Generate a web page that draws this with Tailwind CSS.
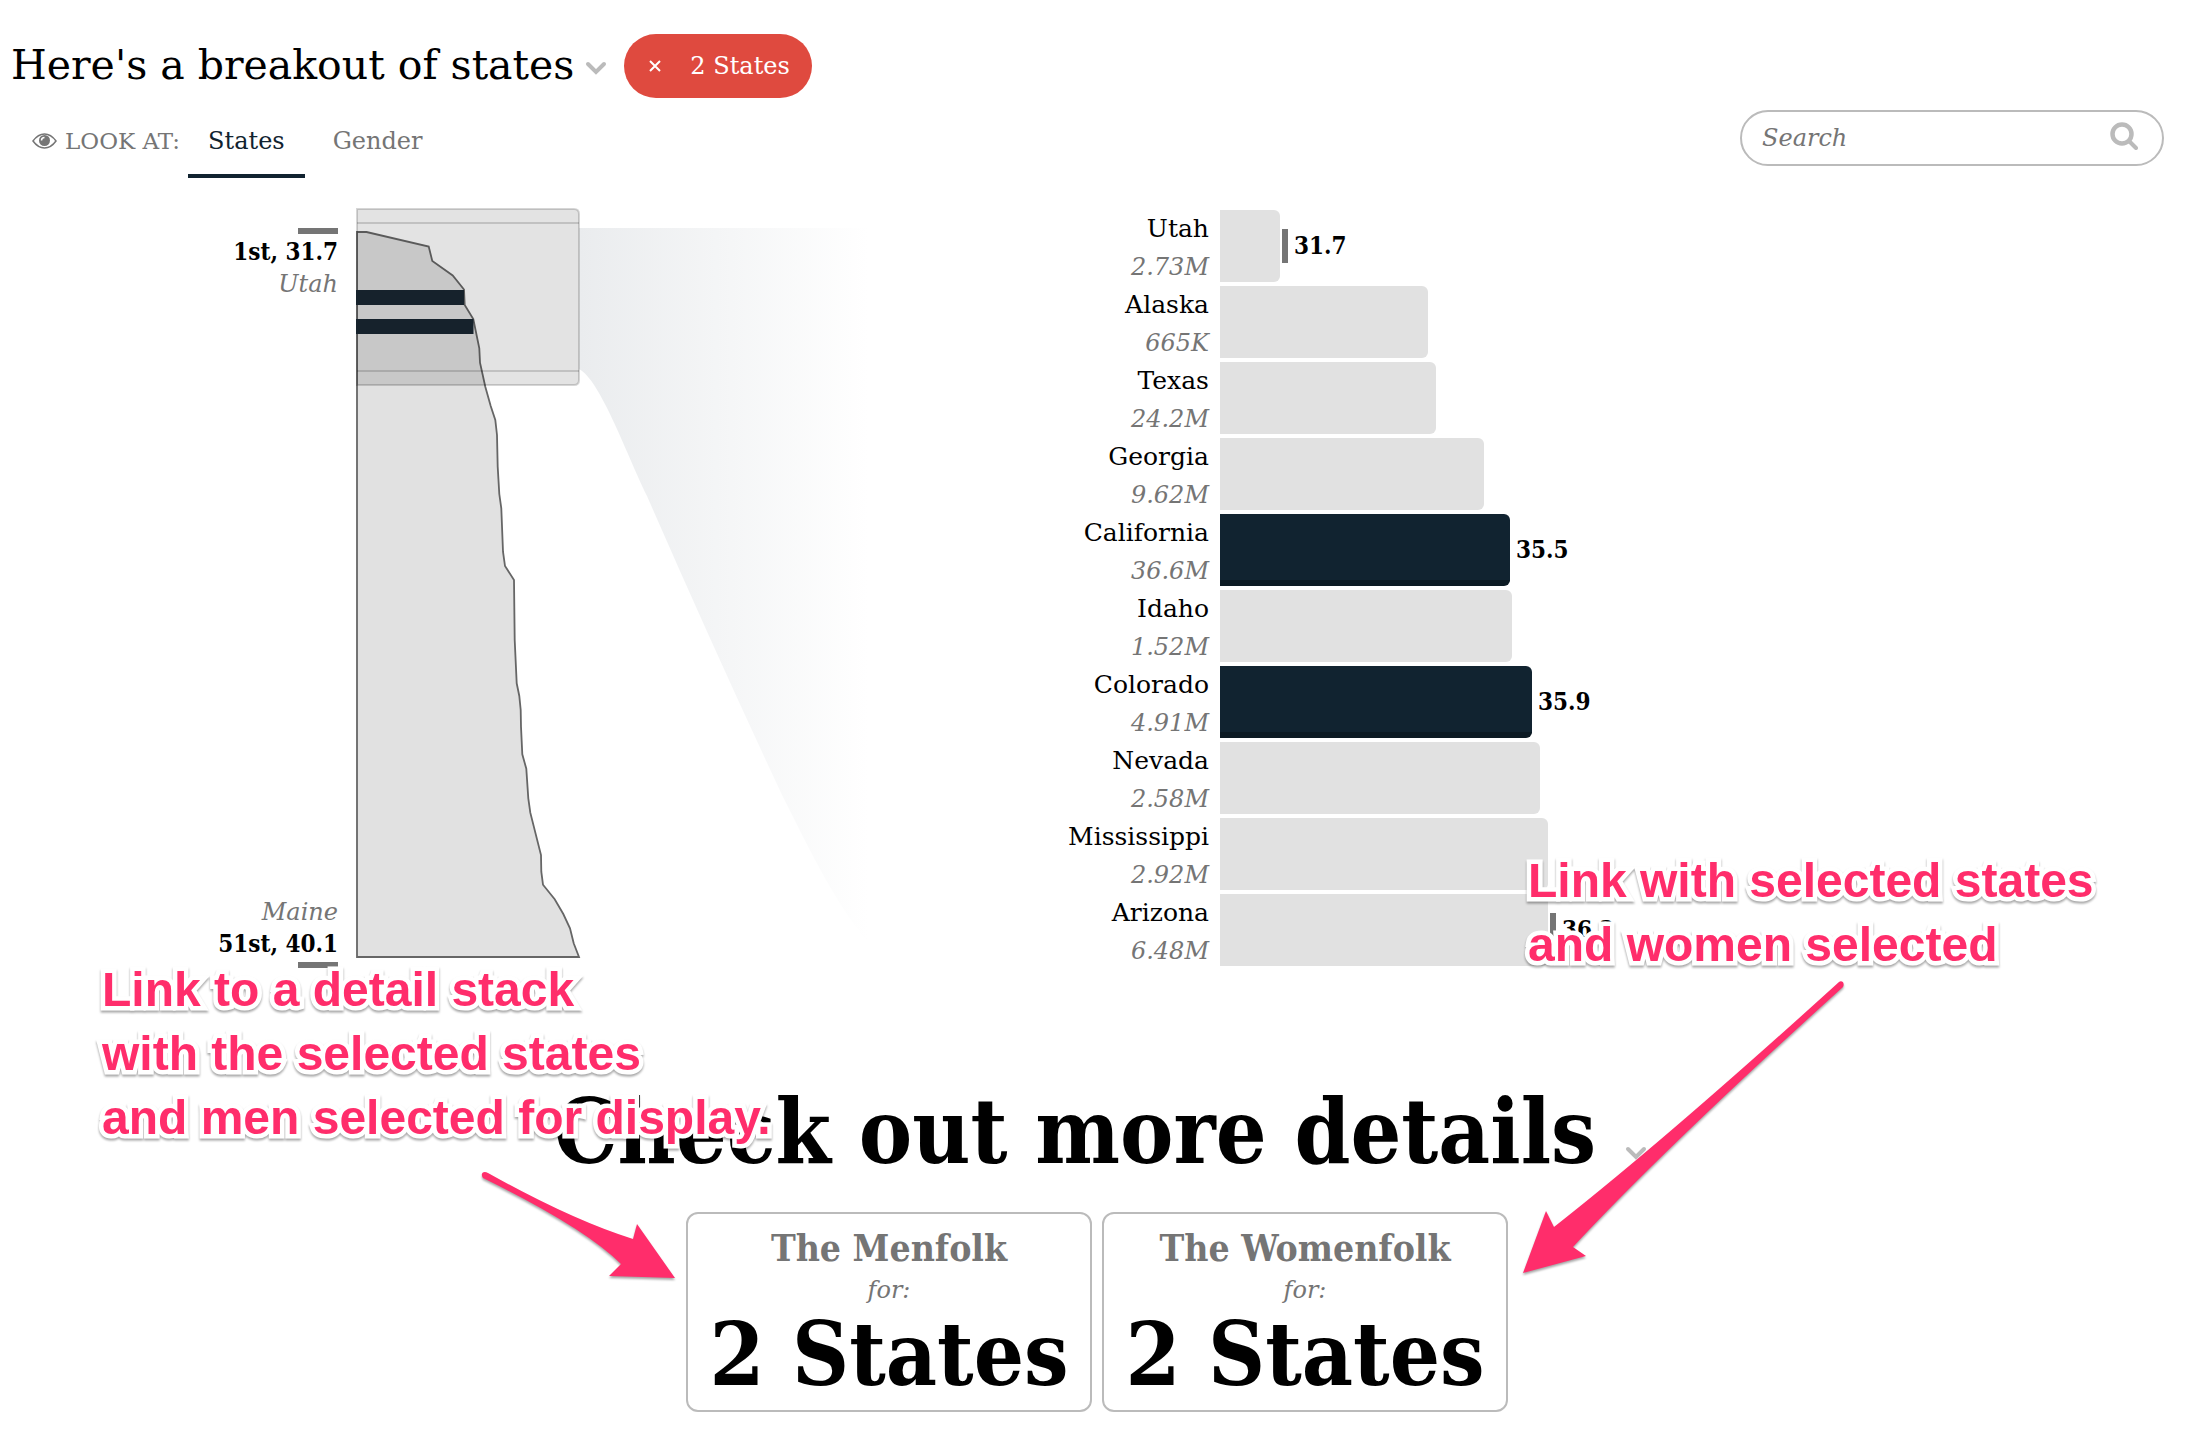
<!DOCTYPE html>
<html lang="en">
<head>
<meta charset="utf-8">
<title>Breakout of states</title>
<script src="https://cdn.jsdelivr.net/npm/@tailwindcss/browser@4"></script>
</head>
<body class="relative min-h-screen overflow-x-hidden bg-white font-['DejaVu_Serif',serif] text-2xl text-black">

<header class="flex items-center pt-[34px] pl-[11px]">
  <h1 class="-mt-0.5 text-[41px] leading-16 whitespace-nowrap">Here's a breakout of states</h1>
  <button type="button" aria-label="Change question" class="ml-2.5 flex h-16 w-6 items-center justify-center pt-1">
    <svg width="22" height="14" viewBox="0 0 22 14" fill="none" stroke="#bbb" stroke-width="4" stroke-linecap="round"><path d="M3 3 11 11 19 3"/></svg>
  </button>
  <button type="button" class="ml-4 flex h-16 items-center rounded-full bg-[#df4a3f] px-6 pr-[22px] text-2xl text-white">
    <svg class="mr-7" width="14" height="14" viewBox="0 0 14 14" stroke="#fff" stroke-width="2"><path d="M2 2 12 12M12 2 2 12"/></svg>
    2 States
  </button>
</header>

<div class="mt-3 flex items-start justify-between pr-[38px] pl-8">
  <nav class="flex h-17 items-stretch text-[#757575]" aria-label="Look at">
    <span class="mr-2 flex items-center gap-2 pb-1.5 text-[23px] whitespace-nowrap">
      <svg width="25" height="16" viewBox="0 0 25 16"><path d="M1 8C5 2.500 9 1 12.500 1S20 2.500 24 8C20 13.500 16 15 12.500 15S5 13.500 1 8Z" fill="none" stroke="#757575" stroke-width="1.500"/><circle cx="12.500" cy="7.500" r="5.500" fill="#757575"/><path d="M9.500 7.500A3 3 0 0 1 12.500 4.500" fill="none" stroke="#fff" stroke-width="1.500"/></svg>
      LOOK AT:
    </span>
    <a href="#states" class="flex items-center border-b-4 border-[#112330] px-5 pb-0.5 text-[#112330]">States</a>
    <a href="#gender" class="flex items-center px-7 pb-1.5">Gender</a>
  </nav>
  <label class="flex h-14 w-[424px] items-center rounded-full border-2 border-[#bbb] pr-6 pl-5">
    <input type="search" placeholder="Search" aria-label="Search" class="min-w-0 flex-1 italic outline-none placeholder:text-[#757575]">
    <svg class="-mt-1" width="28" height="28" viewBox="0 0 28 28" fill="none" stroke="#bbb" stroke-linecap="round"><circle cx="12" cy="12" r="9.500" stroke-width="4.500"/><path d="M20 20 26 26" stroke-width="4"/></svg>
  </label>
</div>

<main>
  <div class="mt-[30px] grid grid-cols-[12fr_13fr]">
    <section class="flex gap-[18px]" aria-label="Distribution">
      <div class="flex w-[338px] flex-col items-end justify-between pt-5 leading-8">
        <div class="flex flex-col items-end">
          <div class="h-1.5 w-10 bg-[#757575]"></div>
          <b class="mt-0.5 font-['DejaVu_Serif_Condensed','DejaVu_Serif',serif]">1st, 31.7</b>
          <i class="text-[#757575]">Utah</i>
        </div>
        <div class="flex flex-col items-end">
          <i class="text-[#757575]">Maine</i>
          <b class="mb-0.5 font-['DejaVu_Serif_Condensed','DejaVu_Serif',serif]">51st, 40.1</b>
          <div class="h-1.5 w-10 bg-[#757575]"></div>
        </div>
      </div>
      <svg width="540" height="760" viewBox="356 208 540 760" role="img" aria-label="All states by median age">
        <defs><linearGradient id="fade" gradientUnits="userSpaceOnUse" x1="579" y1="0" x2="868" y2="0"><stop offset="0" stop-color="#eaecee"/><stop offset="1" stop-color="#fff"/></linearGradient></defs>
        <path d="M579 228H880V955C840 915 810 850 783 797Q715 652 647 496C625 450 600 380 579 369Z" fill="url(#fade)"/>
        <path d="M357 232H366.500L428.700 246.500 432.300 261 452.700 275.500 464 289.500 464.700 305 473.300 319 479.300 348.300 480 362.700 485.300 386.700 490.700 406 495.300 420 497 435 497.700 466.700 499.300 494 501.300 508.300 503 551.700 505 566 514 580 514.700 640 516.700 683.300 519.300 696 520.700 710 521 726.700 522.300 754.300 526.300 768.700 528.300 798.300 530.300 812.700 541 855 541.300 871.700 543 884.700 554.700 899.300 563.300 914 570 928.300 573.700 943.300 579 957H357Z" fill="#e1e1e1" stroke="#666" stroke-width="1.800"/>
        <path d="M357 209H574Q579 209 579 214V380Q579 385 574 385H357Z" fill="#000" fill-opacity=".11" stroke="#000" stroke-opacity=".16" stroke-width="2"/>
        <path d="M357 223H579M357 371H579" stroke="#000" stroke-opacity=".15" stroke-width="2"/>
        <path d="M356 290H464V305H356ZM356 319H473.500V334H356Z" fill="#16222c"/>
      </svg>
    </section>

    <section id="bars" class="flex flex-col gap-1 pt-0.5" aria-label="States"></section>
  </div>

  <div class="flex items-end justify-center pt-[104px]">
    <h2 class="font-['DejaVu_Serif_Condensed','DejaVu_Serif',serif] text-[89px] leading-[120px] font-bold whitespace-nowrap">Check out more details</h2>
    <button type="button" aria-label="Change details" class="ml-7 flex w-6 justify-center pb-8">
      <svg width="22" height="14" viewBox="0 0 22 14" fill="none" stroke="#bbb" stroke-width="4" stroke-linecap="round"><path d="M3 3 11 11 19 3"/></svg>
    </button>
  </div>

  <div class="flex justify-center gap-2.5 pt-5 pr-2">
    <a href="#men" class="flex h-[200px] w-[406px] flex-col items-center rounded-xl border-2 border-[#bbb] pt-2.5">
      <span class="font-['DejaVu_Serif_Condensed','DejaVu_Serif',serif] text-[37px] leading-12 font-bold text-[#757575]">The Menfolk</span>
      <i class="mt-0.5 leading-8 text-[#757575]">for:</i>
      <b class="font-['DejaVu_Serif_Condensed','DejaVu_Serif',serif] text-[88px] leading-24 whitespace-nowrap">2 States</b>
    </a>
    <a href="#women" class="flex h-[200px] w-[406px] flex-col items-center rounded-xl border-2 border-[#bbb] pt-2.5">
      <span class="font-['DejaVu_Serif_Condensed','DejaVu_Serif',serif] text-[37px] leading-12 font-bold text-[#757575]">The Womenfolk</span>
      <i class="mt-0.5 leading-8 text-[#757575]">for:</i>
      <b class="font-['DejaVu_Serif_Condensed','DejaVu_Serif',serif] text-[88px] leading-24 whitespace-nowrap">2 States</b>
    </a>
  </div>
</main>

<!-- review notes laid over the page -->
<p class="absolute top-[958px] left-[102px] font-['Liberation_Sans',sans-serif] text-5xl leading-16 font-bold whitespace-nowrap text-[#ff2d6b] drop-shadow-[0_2px_1px_rgba(0,0,0,0.35)] [-webkit-text-stroke:9px_white] [paint-order:stroke_fill]">Link to a detail stack<br>with the selected states<br>and men selected for display.</p>
<p class="absolute top-[849px] left-[1528px] font-['Liberation_Sans',sans-serif] text-5xl leading-16 font-bold whitespace-nowrap text-[#ff2d6b] drop-shadow-[0_2px_1px_rgba(0,0,0,0.35)] [-webkit-text-stroke:9px_white] [paint-order:stroke_fill]">Link with selected states<br>and women selected</p>
<svg class="absolute top-[1165px] left-[475px] drop-shadow-[0_2px_1px_rgba(0,0,0,0.35)]" width="210" height="120" viewBox="475 1165 210 120" fill="#ff2d6b"><path d="M488 1173Q572 1220 633 1239L637 1224 675 1278 609 1276 621 1264Q585 1228 483 1178C480 1174 483 1170 488 1173Z"/></svg>
<svg class="absolute top-[975px] left-[1515px] drop-shadow-[0_2px_1px_rgba(0,0,0,0.35)]" width="335" height="305" viewBox="1515 975 335 305" fill="#ff2d6b"><path d="M1843 987Q1665 1148 1573 1247L1586 1256 1523 1273 1546 1211 1554 1227Q1665 1140 1839 982C1842 980 1845 983 1843 987Z"/></svg>

<script>
  const states = [
    ['Utah', '2.73M', 60, '31.7', true],
    ['Alaska', '665K', 208],
    ['Texas', '24.2M', 216],
    ['Georgia', '9.62M', 264],
    ['California', '36.6M', 290, '35.5'],
    ['Idaho', '1.52M', 292],
    ['Colorado', '4.91M', 312, '35.9'],
    ['Nevada', '2.58M', 320],
    ['Mississippi', '2.92M', 328],
    ['Arizona', '6.48M', 328, '36.2', true]
  ];
  document.getElementById('bars').innerHTML = states.map(([name, pop, width, value, tick]) => `
    <div class="flex h-18 items-center">
      <div class="flex w-[152px] flex-col items-end pt-1 leading-[38px]">
        <span class="text-[25px]">${name}</span>
        <i class="text-[#757575]">${pop}</i>
      </div>
      <div class="ml-[11px] h-18 rounded-r-md ${value && !tick ? 'border-b-6 border-[#0c1a23] bg-[#112330]' : 'bg-[#e1e1e1]'}" style="width:${width}px"></div>
      ${tick ? '<div class="ml-0.5 h-[34px] w-1.5 bg-[#757575]"></div>' : ''}
      ${value ? `<b class="ml-1.5 font-['DejaVu_Serif_Condensed','DejaVu_Serif',serif]">${value}</b>` : ''}
    </div>`).join('');
</script>
</body>
</html>
